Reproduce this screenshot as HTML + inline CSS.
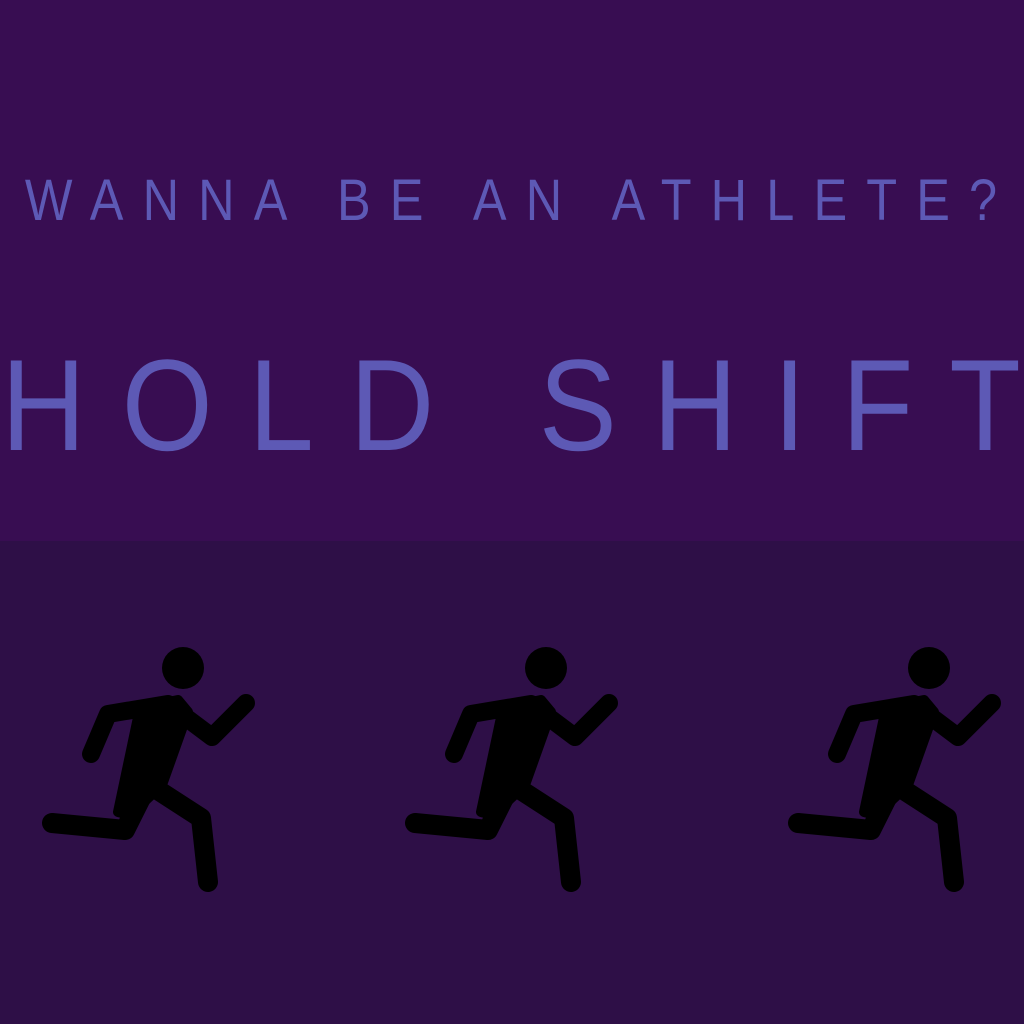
<!DOCTYPE html>
<html><head><style>
html,body{margin:0;padding:0;width:1024px;height:1024px;overflow:hidden;font-family:"Liberation Sans",sans-serif}
.top{position:absolute;left:0;top:0;width:1024px;height:541px;background:#380d52}
.bot{position:absolute;left:0;top:541px;width:1024px;height:483px;background:#2e0f47}
.t{position:absolute;left:511px;color:#5d59b5;white-space:nowrap;transform-origin:0 0}
.t1{top:168px;font-size:58px;letter-spacing:22px;line-height:66px;padding-left:22px;transform:scaleX(0.87) translateX(-50%)}
.t2{top:340px;font-size:130px;letter-spacing:40px;line-height:130px;padding-left:40px;transform:scaleX(0.90) translateX(-50%)}
svg{position:absolute;left:0;top:0}
</style></head><body>
<div class="top"></div><div class="bot"></div>
<div class="t t1">WANNA BE AN ATHLETE?</div>
<div class="t t2">HOLD SHIFT</div>
<svg width="1024" height="1024">
<defs><g id="r" fill="none" stroke="#000" stroke-linecap="round" stroke-linejoin="round">
<circle cx="183" cy="668" r="21" fill="#000" stroke="none"/>
<polyline points="91,754 108,714 168,704 212,737 246,703" stroke-width="18"/>
<polygon points="140,708 178,700 188,712 162,785 130,815 118,812" fill="#000" stroke-width="10"/>
<polyline points="52,823 125,830 145,790" stroke-width="20"/>
<polyline points="150,785 201,818 208,882" stroke-width="20"/>
</g></defs>
<use href="#r"/>
<use href="#r" x="363"/>
<use href="#r" x="746"/>
</svg>
</body></html>
